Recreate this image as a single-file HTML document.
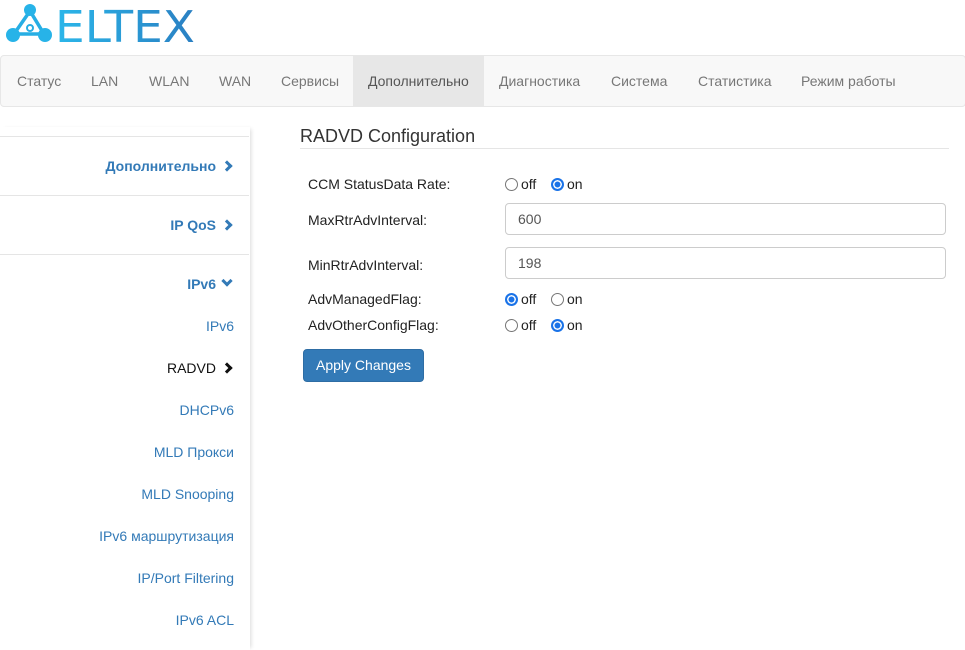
<!DOCTYPE html>
<html><head><meta charset="utf-8"><style>
*{box-sizing:border-box;margin:0;padding:0}
body{width:965px;height:650px;overflow:hidden;background:#fff;font-family:"Liberation Sans",Arial,sans-serif;font-size:14px;color:#333;position:relative}
.nav{position:absolute;left:0;top:55px;width:966px;height:52px;background:#f8f8f8;border:1px solid #e7e7e7;border-radius:4px}
.nav span{position:absolute;top:0;height:50px;line-height:50px;color:#777;font-size:14px}
.nav .act{background:#e7e7e7;color:#555;padding:0 15px}
.side{position:absolute;left:0;top:127px;width:250px;height:523px;box-shadow:3px 0 4px -2px rgba(0,0,0,.15)}
.hr{position:absolute;left:0;width:249px;height:1px;background:#e5e5e5}
.it{position:absolute;right:16px;color:#337ab7;font-size:14px;text-align:right;white-space:nowrap}
.b{font-weight:bold}
.chev{display:inline-block;width:8px;height:8px;border-right:3px solid #337ab7;border-bottom:3px solid #337ab7;transform:rotate(-45deg);margin-left:7px;margin-right:3px;position:relative;top:-1px}
.down{transform:rotate(45deg);top:-4px}
h3{position:absolute;left:300px;top:126px;font-size:18px;font-weight:normal;color:#333}
.line{position:absolute;left:300px;top:148px;width:649px;height:1px;background:#e5e5e5}
.lbl{position:absolute;left:308px;font-size:14px;color:#222}
.r{position:absolute;font-size:14px;color:#222}
.rad{display:inline-block;width:13px;height:13px;border:1px solid #767676;border-radius:50%;vertical-align:-2px;margin-right:3px;background:#fff}
.rad.on{border:2px solid #1a73e8;box-shadow:inset 0 0 0 1.5px #fff;background:#1a73e8}
.inp{position:absolute;left:505px;width:441px;height:32px;border:1px solid #ccc;border-radius:4px;padding-left:12px;line-height:30px;color:#555;font-size:14px}
.btn{position:absolute;left:303px;top:349px;width:121px;height:33px;background:#337ab7;border:1px solid #2e6da4;border-radius:4px;color:#fff;font-size:14px;line-height:31px;text-align:center}
</style></head><body>
<svg style="position:absolute;left:0;top:0" width="220" height="50">
<defs><linearGradient id="g" x1="0" x2="1"><stop offset="0" stop-color="#2bb7ea"/><stop offset="1" stop-color="#2a7fc2"/></linearGradient></defs>
<g stroke="#27aee4" stroke-width="3.5" fill="none"><path d="M30 11 L14 34 L44 34 Z"/></g>
<circle cx="30" cy="10" r="6" fill="#27b3e8"/><circle cx="13" cy="35" r="7" fill="#27b3e8"/><circle cx="45" cy="35" r="7" fill="#27b3e8"/><circle cx="30" cy="28" r="3" fill="#fff" stroke="#27aee4" stroke-width="2"/>
<text x="55" y="42" font-family="DejaVu Sans,sans-serif" font-size="44" font-weight="normal" fill="url(#g)" textLength="140" lengthAdjust="spacingAndGlyphs">ELTEX</text>
</svg>
<div class="nav">
<span style="left:16px">Статус</span><span style="left:90px">LAN</span><span style="left:148px">WLAN</span><span style="left:218px">WAN</span><span style="left:280px">Сервисы</span><span class="act" style="left:352px">Дополнительно</span><span style="left:498px">Диагностика</span><span style="left:610px">Система</span><span style="left:697px">Статистика</span><span style="left:800px">Режим работы</span>
</div>
<div class="side">
<div class="hr" style="top:9px"></div>
<div class="it b" style="top:31px">Дополнительно<i class="chev"></i></div>
<div class="hr" style="top:68px"></div>
<div class="it b" style="top:90px">IP QoS<i class="chev"></i></div>
<div class="hr" style="top:127px"></div>
<div class="it b" style="top:149px">IPv6<i class="chev down"></i></div>
<div class="it" style="top:191px">IPv6</div>
<div class="it" style="top:233px;color:#111">RADVD<i class="chev" style="border-color:#111"></i></div>
<div class="it" style="top:275px">DHCPv6</div>
<div class="it" style="top:317px">MLD Прокси</div>
<div class="it" style="top:359px">MLD Snooping</div>
<div class="it" style="top:401px">IPv6 маршрутизация</div>
<div class="it" style="top:443px">IP/Port Filtering</div>
<div class="it" style="top:485px">IPv6 ACL</div>
</div>
<h3>RADVD Configuration</h3><div class="line"></div>
<div class="lbl" style="top:176px">CCM StatusData Rate:</div>
<div class="r" style="left:505px;top:176px"><i class="rad"></i>off</div><div class="r" style="left:551px;top:176px"><i class="rad on"></i>on</div>
<div class="lbl" style="top:212px">MaxRtrAdvInterval:</div>
<div class="inp" style="top:203px">600</div>
<div class="lbl" style="top:257px">MinRtrAdvInterval:</div>
<div class="inp" style="top:247px">198</div>
<div class="lbl" style="top:291px">AdvManagedFlag:</div>
<div class="r" style="left:505px;top:291px"><i class="rad on"></i>off</div><div class="r" style="left:551px;top:291px"><i class="rad"></i>on</div>
<div class="lbl" style="top:317px">AdvOtherConfigFlag:</div>
<div class="r" style="left:505px;top:317px"><i class="rad"></i>off</div><div class="r" style="left:551px;top:317px"><i class="rad on"></i>on</div>
<div class="btn">Apply Changes</div>
</body></html>
